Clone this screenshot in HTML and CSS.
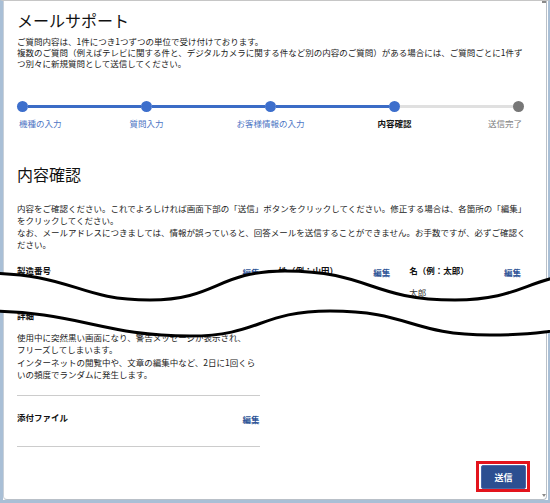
FILE: index.html
```html
<!DOCTYPE html>
<html lang="ja">
<head>
<meta charset="utf-8">
<title>メールサポート</title>
<link rel="stylesheet" href="styles.css">
</head>
<body>
<div class="window">
  <div class="panel">
    <h1 class="title">メールサポート</h1>
    <p class="intro">ご質問内容は、1件につき1つずつの単位で受け付けております。<br>複数のご質問（例えばテレビに関する件と、デジタルカメラに関する件など別の内容のご質問）がある場合には、ご質問ごとに1件ずつ別々に新規質問として送信してください。</p>

    <div class="steps">
      <div class="step done first"><span class="dot"></span><span class="step-label">機種の入力</span></div>
      <div class="bar done"></div>
      <div class="step done"><span class="dot"></span><span class="step-label">質問入力</span></div>
      <div class="bar done"></div>
      <div class="step done"><span class="dot"></span><span class="step-label">お客様情報の入力</span></div>
      <div class="bar done"></div>
      <div class="step current"><span class="dot"></span><span class="step-label">内容確認</span></div>
      <div class="bar"></div>
      <div class="step todo last"><span class="dot"></span><span class="step-label">送信完了</span></div>
    </div>

    <h2 class="section-title">内容確認</h2>
    <p class="note">内容をご確認ください。これでよろしければ画面下部の「送信」ボタンをクリックしてください。修正する場合は、各箇所の「編集」をクリックしてください。<br>なお、メールアドレスにつきましては、情報が誤っていると、回答メールを送信することができません。お手数ですが、必ずご確認ください。</p>

    <div class="fields">
      <div class="field wide">
        <div class="field-head"><span class="field-label">製造番号</span><a href="#" class="edit">編集</a></div>
        <div class="value">1234567</div>
      </div>
      <div class="field">
        <div class="field-head"><span class="field-label">姓（例：山田）</span><a href="#" class="edit">編集</a></div>
        <div class="value">山田</div>
      </div>
      <div class="field">
        <div class="field-head"><span class="field-label">名（例：太郎）</span><a href="#" class="edit">編集</a></div>
        <div class="value">太郎</div>
      </div>
      <div class="field wide">
        <div class="field-head"><span class="field-label">詳細</span><a href="#" class="edit">編集</a></div>
        <p class="value detail">使用中に突然黒い画面になり、警告メッセージが表示され、<br>フリーズしてしまいます。<br>インターネットの閲覧中や、文章の編集中など、2日に1回くらいの頻度でランダムに発生します。</p>
      </div>
      <div class="field wide attach">
        <div class="field-head"><span class="field-label">添付ファイル</span><a href="#" class="edit">編集</a></div>
        <div class="value empty"></div>
      </div>
    </div>

    <div class="actions">
      <div class="highlight"><button class="submit" type="button">送信</button></div>
    </div>
  </div>

  <svg class="cut" width="550" height="503" viewBox="0 0 550 503" aria-hidden="true">
    <path class="cut-fill" d="M-20,273 C75,273 75,300 150,300 C217,300 217,271 285,271 C370,271 370,300 455,300 C527,300 527,273 600,273 L600,322 C560,330 540,335 490,335 C410,335 410,311 330,311 C260,311 260,336 190,336 C100,336 80,311 -20,311 Z"/>
    <path class="cut-line" d="M-20,273 C75,273 75,300 150,300 C217,300 217,271 285,271 C370,271 370,300 455,300 C527,300 527,273 600,273"/>
    <path class="cut-line" d="M-20,311 C80,311 100,336 190,336 C260,336 260,311 330,311 C410,311 410,335 490,335 C540,335 560,330 600,322"/>
  </svg>
  <span class="scroll-top"></span>
  <span class="scroll-bottom"></span>
</div>
</body>
</html>
```

FILE: styles.css
```css
html, body {
  margin: 0;
  padding: 0;
  background: #ffffff;
}

body {
  font-family: "Noto Sans CJK JP", "Noto Sans", sans-serif;
  color: #222222;
  width: 550px;
  height: 503px;
  overflow: hidden;
}

.window {
  position: relative;
  box-sizing: border-box;
  width: 550px;
  height: 503px;
  border-top: 1px solid #c6c6c6;
  border-left: 3px solid #a9bfd6;
  border-right: 2px solid #a9bfd6;
  border-bottom: 3px solid #a9bfd6;
  background: #ffffff;
}

.panel {
  box-sizing: border-box;
  height: 100%;
  margin-right: 1px;
  padding: 9px 17px 0 13px;
  border-left: 1px solid #c9d0d8;
  border-right: 1px solid #b9c0c8;
  border-bottom: 1px solid #b9c0c8;
  border-radius: 0 0 4px 4px;
  overflow: hidden;
}

.title {
  margin: 0;
  font-size: 16px;
  line-height: 20px;
  font-weight: normal;
  color: #111111;
}

.intro {
  margin: 6px 0 0;
  font-size: 8.5px;
  line-height: 11px;
}

/* stepper */
.steps {
  display: flex;
  align-items: flex-start;
  margin: 32px 5px 0 0;
}

.step {
  flex: none;
  width: 11px;
  display: flex;
  flex-direction: column;
  align-items: center;
}

.step.first { align-items: flex-start; }
.step.last { align-items: flex-end; }

.dot {
  width: 11px;
  height: 11px;
  border-radius: 50%;
  background: #3d6fcc;
}

.step.todo .dot { background: #777777; }

.step-label {
  margin-top: 6px;
  white-space: nowrap;
  font-size: 8.5px;
  line-height: 11px;
  color: #4d75c4;
}

.step.first .step-label { margin-left: 2px; }
.step.last .step-label { margin-right: 2px; }
.step.current .step-label { color: #111111; font-weight: bold; }
.step.todo .step-label { color: #7c7c7c; }

.bar {
  flex: 1;
  height: 3px;
  margin-top: 4px;
  background: #e0e0e0;
}

.bar.done { background: #3b6cc6; }

.section-title {
  margin: 35px 0 0;
  font-size: 16px;
  line-height: 20px;
  font-weight: normal;
  color: #111111;
}

.note {
  margin: 18px 0 0;
  font-size: 8.5px;
  line-height: 12px;
}

/* confirmed fields */
.fields {
  display: grid;
  grid-template-columns: repeat(4, 1fr);
  column-gap: 19px;
  margin: 8px 8px 0 0;
}

.field {
  padding: 6px 0 4px;
  border-bottom: 1px solid #cccccc;
}

.field.wide {
  grid-column: span 2;
}

.fields .field.wide:nth-child(4),
.fields .field.wide:nth-child(5) {
  grid-column: 1 / span 2;
}

.field.attach { padding-top: 15px; }

.field-head {
  display: flex;
  justify-content: space-between;
  align-items: flex-start;
  height: 12px;
}

.field-label {
  font-size: 8.5px;
  line-height: 12px;
  font-weight: bold;
  color: #111111;
}

.edit {
  position: relative;
  top: 2px;
  font-size: 8.5px;
  line-height: 12px;
  font-weight: bold;
  color: #2f5597;
  text-decoration: none;
}

.value {
  margin: 9.5px 0 0;
  min-height: 12.5px;
  font-size: 8.5px;
  line-height: 12.5px;
  color: #333333;
}

.value.detail {
  margin-bottom: 10.5px;
  color: #222222;
}

.value.empty {
  min-height: 9.5px;
}

/* submit */
.actions {
  display: flex;
  justify-content: flex-end;
  margin-top: 14px;
  margin-right: -1px;
}

.highlight {
  border: 3px solid #e3141c;
  padding: 1px 1px 0 2px;
}

.submit {
  display: block;
  width: 45px;
  height: 24px;
  padding: 0;
  border: 1px solid #4a68a6;
  border-radius: 2px;
  background: #2c4f91;
  color: #ffffff;
  font-family: "Noto Sans CJK JP", sans-serif;
  font-size: 9px;
  font-weight: bold;
}

/* wavy cut mark laid over the content */
.cut {
  position: absolute;
  left: -3px;
  top: -1px;
  overflow: visible;
  pointer-events: none;
}

.cut-fill { fill: #ffffff; }

.cut-line {
  fill: none;
  stroke: #000000;
  stroke-width: 3;
}

.scroll-top {
  position: absolute;
  right: 2px;
  top: 0;
  width: 4px;
  height: 2px;
  background: #8a8a8a;
}

.scroll-bottom {
  position: absolute;
  right: 2px;
  bottom: 3px;
  width: 0;
  height: 0;
  border-left: 2.5px solid transparent;
  border-right: 2.5px solid transparent;
  border-top: 3px solid #8a8a8a;
}
```
